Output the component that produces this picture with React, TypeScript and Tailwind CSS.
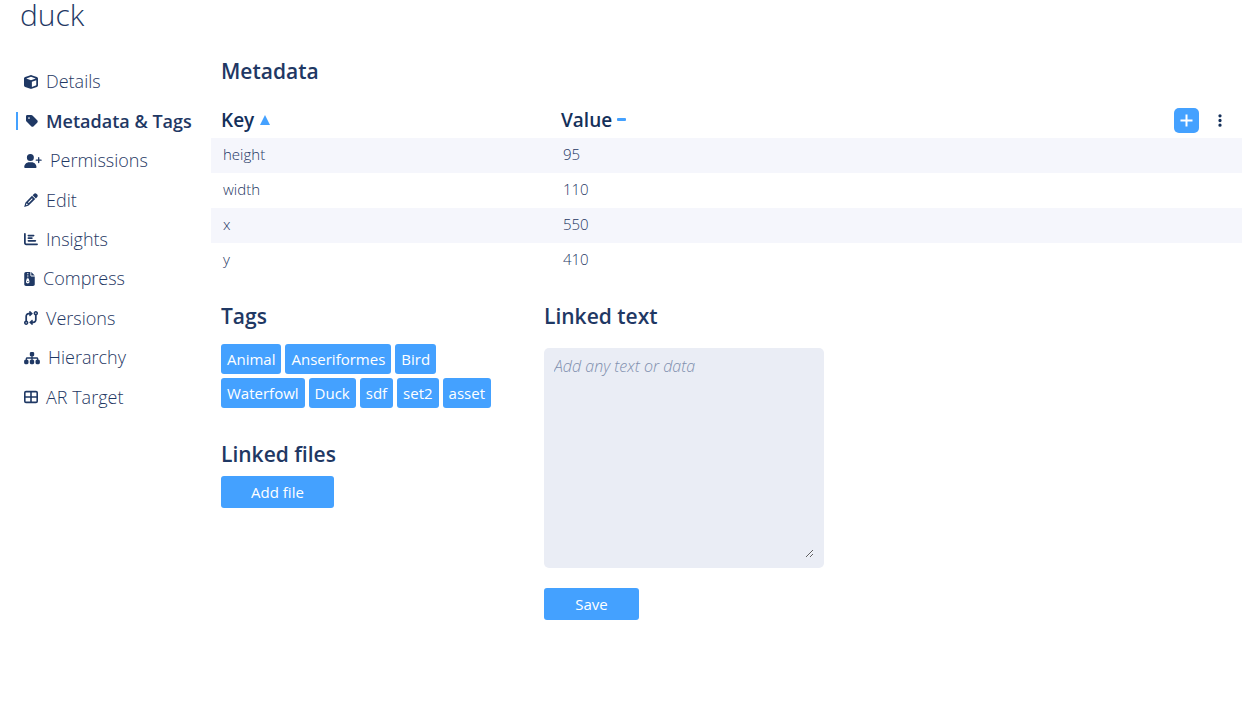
import type { ReactNode } from "react";
import {
  FaChartBar,
  FaCodeCompare,
  FaCube,
  FaEllipsisVertical,
  FaFileZipper,
  FaSitemap,
  FaTag,
  FaUserPlus,
} from "react-icons/fa6";

function GridIcon({ className }: { className?: string }) {
  return (
    <svg viewBox="0 0 14 14" className={className} fill="none" stroke="currentColor" aria-hidden="true">
      <rect x="0.8" y="1.6" width="12.4" height="10.8" rx="1.2" strokeWidth="1.6" />
      <path d="M7 2v10M1 7h12" strokeWidth="1.6" />
    </svg>
  );
}

function PencilIcon({ className }: { className?: string }) {
  return (
    <svg viewBox="0 0 14 14" className={className} fill="currentColor" aria-hidden="true">
      <path d="M9.9.9c.7-.8 1.8-.8 2.5-.1l.8.8c.7.7.7 1.8 0 2.500l-1.300 1.300L8.600 2.200z" />
      <path
        fillRule="evenodd"
        d="M8 2.800l3.200 3.200-6.300 6.300c-.2.200-.5.400-.8.500L.2 13.900l1.100-3.900c.1-.3.300-.6.500-.800zM8 5.200l-4 4 .700.700 4-4zM2.400 10.400l-.5 1.800 1.800-.5-.2-.9z"
      />
    </svg>
  );
}

type NavItem = {
  label: string;
  icon: (props: { className?: string }) => ReactNode;
  iconClass: string;
  active?: boolean;
};

const navItems: NavItem[] = [
  { label: "Details", icon: FaCube, iconClass: "w-[14px]" },
  { label: "Metadata & Tags", icon: FaTag, iconClass: "w-[12px]", active: true },
  { label: "Permissions", icon: FaUserPlus, iconClass: "w-[18px]" },
  { label: "Edit", icon: PencilIcon, iconClass: "w-[14px]" },
  { label: "Insights", icon: FaChartBar, iconClass: "w-[14px]" },
  { label: "Compress", icon: FaFileZipper, iconClass: "w-[11px]" },
  { label: "Versions", icon: FaCodeCompare, iconClass: "w-[14px]" },
  { label: "Hierarchy", icon: FaSitemap, iconClass: "w-[16px]" },
  { label: "AR Target", icon: GridIcon, iconClass: "w-[14px]" },
];

const metadata = [
  { key: "height", value: "95" },
  { key: "width", value: "110" },
  { key: "x", value: "550" },
  { key: "y", value: "410" },
];

const tags = ["Animal", "Anseriformes", "Bird", "Waterfowl", "Duck", "sdf", "set2", "asset"];

function Heading({ children, id }: { children: ReactNode; id?: string }) {
  return (
    <h2 id={id} className="text-[21px] leading-7 font-semibold">
      {children}
    </h2>
  );
}

function SideNav() {
  return (
    <nav aria-label="Asset" className="flex h-[355px] w-[195px] shrink-0 flex-col">
      {navItems.map(({ label, icon: Icon, iconClass, active }) => (
        <a
          key={label}
          href="#"
          aria-current={active ? "page" : undefined}
          className="flex flex-1 items-center whitespace-nowrap"
        >
          <span
            className={
              active
                ? "flex h-[18px] items-center gap-2 border-l-2 border-[#44a1ff] pl-2 text-[18px] font-semibold"
                : "flex h-[18px] items-center gap-2 pl-2 text-[18px] font-light"
            }
          >
            <Icon className={`h-[14px] shrink-0 ${iconClass}`} />
            {label}
          </span>
        </a>
      ))}
    </nav>
  );
}

function MetadataTable() {
  return (
    <table className="mt-4 w-full table-fixed border-collapse text-left">
      <thead>
        <tr className="h-[37px] text-[19px] leading-6 text-[#14305a]">
          <th scope="col" className="w-[340px] pl-[10px] font-semibold">
            <button type="button" className="flex items-center gap-[6px]">
              Key
              <svg viewBox="0 0 10 10" className="h-[10px] w-[10px]" fill="#44a1ff" aria-hidden="true">
                <path d="M5 0 10 10H0z" />
              </svg>
            </button>
          </th>
          <th scope="col" className="pl-[10px] font-semibold">
            <button type="button" className="flex items-center gap-[5px]">
              Value
              <svg viewBox="0 0 9 3" className="h-[3px] w-[9px]" fill="#44a1ff" aria-hidden="true">
                <rect width="9" height="3" rx="1" />
              </svg>
            </button>
          </th>
          <th scope="col" className="w-[80px] pt-[2px]">
            <div className="flex items-center gap-[10px] pl-3">
              <button
                type="button"
                aria-label="Add metadata"
                className="flex h-[25px] w-[25px] items-center justify-center rounded-[5px] bg-[#44a1ff]"
              >
                <svg viewBox="0 0 13 13" className="h-[13px] w-[13px]" fill="none" stroke="white" strokeWidth="2" aria-hidden="true">
                  <path d="M6.5 0.5v12M0.5 6.5h12" />
                </svg>
              </button>
              <button type="button" aria-label="More options" className="flex h-[25px] w-[21px] items-center justify-center">
                <FaEllipsisVertical className="h-[15px] w-[6px]" />
              </button>
            </div>
          </th>
        </tr>
      </thead>
      <tbody>
        {metadata.map((row) => (
          <tr key={row.key} className="h-[35px] text-[15px] leading-5 font-light odd:bg-[#f5f6fc]">
            <td className="pb-[3px] pl-3">{row.key}</td>
            <td className="pb-[3px] pl-3">{row.value}</td>
            <td />
          </tr>
        ))}
      </tbody>
    </table>
  );
}

export default function App() {
  return (
    <div className="bg-white pr-[10px] pl-4 font-['Open_Sans',sans-serif] text-[#1f3864]">
      <h1 className="pl-1 text-[30px] leading-[30px] font-light">duck</h1>
      <div className="mt-[27px] flex">
        <div className="mt-[5px]">
          <SideNav />
        </div>
        <main className="min-w-0 flex-1">
          <div className="pl-[10px]">
            <Heading>Metadata</Heading>
          </div>
          <MetadataTable />
          <div className="flex gap-[28px] pt-6 pl-[10px]">
            <div className="w-[295px] shrink-0">
              <Heading>Tags</Heading>
              <ul className="mt-[14px] flex flex-wrap gap-1">
                {tags.map((tag) => (
                  <li key={tag} className="flex h-[30px] items-center rounded-[3px] bg-[#44a1ff] px-[6px] text-[15px] text-white">
                    {tag}
                  </li>
                ))}
              </ul>
              <div className="mt-8">
                <Heading>Linked files</Heading>
                <button type="button" className="mt-2 h-8 w-[113px] rounded-[3px] bg-[#44a1ff] text-[15px] text-white">
                  Add file
                </button>
              </div>
            </div>
            <div className="w-[280px]">
              <Heading id="linked-text">Linked text</Heading>
              <div className="mt-[18px] flex rounded-[5px] bg-[#eaedf5] p-[10px]">
                <textarea
                  aria-labelledby="linked-text"
                  placeholder="Add any text or data"
                  className="h-[200px] w-full resize bg-transparent text-[16px] leading-4 font-light outline-none placeholder:text-[#7f8fae] placeholder:italic"
                />
              </div>
              <button type="button" className="mt-5 h-8 w-[95px] rounded-[3px] bg-[#44a1ff] text-[15px] text-white">
                Save
              </button>
            </div>
          </div>
        </main>
      </div>
    </div>
  );
}
